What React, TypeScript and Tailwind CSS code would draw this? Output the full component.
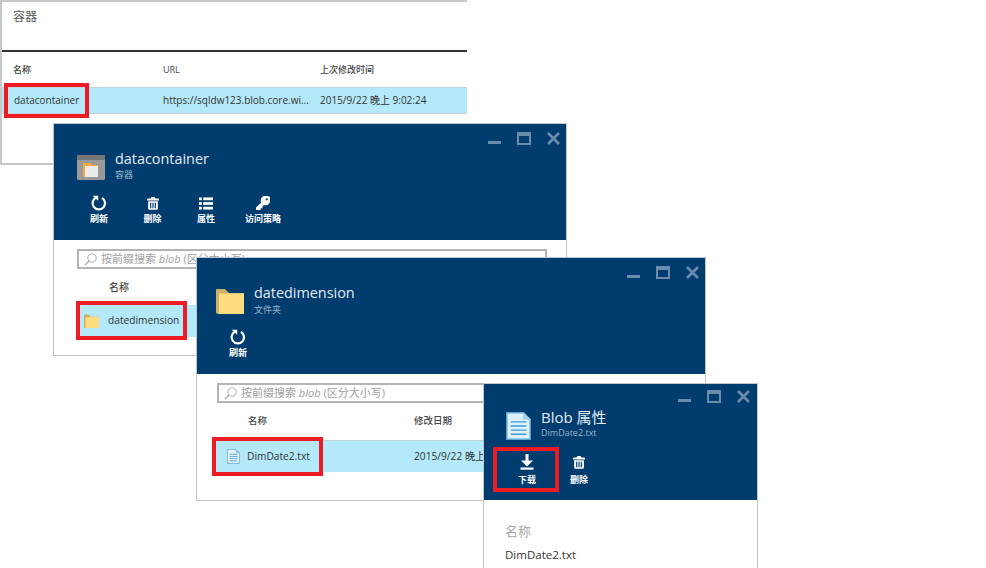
import React from "react";

const font = { fontFamily: '"Open Sans", "Noto Sans CJK SC", sans-serif' };

function Refresh() {
  return (
    <svg width="16" height="16" viewBox="0 0 16 16" fill="none">
      <path d="M5.2 2.6A6.2 6.2 0 1 0 11 2.9" stroke="#fff" strokeWidth="2.2" />
      <path d="M1.6 0.8 L7.2 0.8 L7.2 5.8 Z" fill="#fff" />
    </svg>
  );
}

function Trash() {
  return (
    <svg width="12" height="13" viewBox="0 0 14 15" fill="#fff">
      <path d="M5 0h4l.6 1.6H13a1 1 0 0 1 1 1V4H0V2.6a1 1 0 0 1 1-1h3.4z" />
      <path d="M1.3 5h11.4v8.4a1.4 1.4 0 0 1-1.4 1.4H2.7a1.4 1.4 0 0 1-1.4-1.4zM3.6 6.6v6.4h1.4V6.6zM6.3 6.6v6.4h1.4V6.6zM9 6.6v6.4h1.4V6.6z" fillRule="evenodd" />
    </svg>
  );
}

function ListIcon() {
  return (
    <svg width="14" height="13" viewBox="0 0 15 13" fill="#fff">
      <rect x="0" y="0" width="3" height="3" />
      <rect x="4.5" y="0" width="10.5" height="3" />
      <rect x="0" y="5" width="3" height="3" />
      <rect x="4.5" y="5" width="10.5" height="3" />
      <rect x="0" y="10" width="3" height="3" />
      <rect x="4.5" y="10" width="10.5" height="3" />
    </svg>
  );
}

function KeyIcon() {
  return (
    <svg width="14" height="14" viewBox="0 0 15 15" fill="#fff">
      <path d="M9.5 0H13a2 2 0 0 1 2 2v3.5A4.5 4.5 0 0 1 10.5 10c-.8 0-1.3-.1-1.9-.4L7 11.2V13H5v2H0v-2.6l5.4-5.3A5 5 0 0 1 5 4.5 4.5 4.5 0 0 1 9.5 0z" />
      <circle cx="11.5" cy="3.5" r="1.2" fill="#003c6e" />
    </svg>
  );
}

function Download() {
  return (
    <svg width="14" height="16" viewBox="0 0 14 16" fill="#fff">
      <path d="M5.5 0h3v6.5H13L7 12.5 1 6.5h4.5z" />
      <rect x="0.5" y="13.5" width="13" height="2.2" />
    </svg>
  );
}

function FolderIcon({ w, h }: { w: number; h: number }) {
  return (
    <svg width={w} height={h} viewBox="0 0 28 26">
      <path d="M0 2a1 1 0 0 1 1-1h8l4 4h15v21H2a2 2 0 0 1-2-2z" fill="#cdb066" />
      <path d="M3 5.5h25V26H3z" fill="#ffdc7f" />
    </svg>
  );
}

function ContainerIcon() {
  return (
    <svg width="28" height="25" viewBox="0 0 28 25">
      <rect width="28" height="25" rx="1.5" fill="#9a9a9a" />
      <rect width="28" height="5" fill="#777777" />
      <path d="M6 8h8l1 2h6v12H6z" fill="#f8a840" />
      <path d="M8 11h13v11H8z" fill="#ebebeb" />
    </svg>
  );
}

function FileIcon({ w, h, light }: { w: number; h: number; light?: boolean }) {
  return (
    <svg width={w} height={h} viewBox="0 0 24 27">
      <path d="M.7.7h16l6.6 6.6v19H.7z" fill={light ? "#dff1fa" : "#e6f5fc"} stroke="#5ba7d6" strokeWidth="1.4" />
      <path d="M16.5 0 24 7.5h-7.5z" fill={light ? "#9fd0ec" : "#8cc4e6"} />
      <path d="M4.5 9.5h15M4.5 13.5h15M4.5 17.5h15M4.5 21.5h15" stroke="#3f9bd6" strokeWidth="1.4" />
    </svg>
  );
}

function WindowControls({ className }: { className: string }) {
  return (
    <div className={`absolute flex items-start gap-[16px] ${className}`}>
      <div className="mt-[9px] h-[3px] w-[13px] bg-[#6c8cab]" />
      <div className="h-[13px] w-[14px] border-2 border-t-[4px] border-[#6c8cab]" />
      <svg width="13" height="13" viewBox="0 0 13 13" stroke="#6c8cab" strokeWidth="2.6">
        <path d="M1 1l11 11M12 1 1 12" />
      </svg>
    </div>
  );
}

function Tool({
  icon,
  label,
  className,
  labelClassName = "mt-[1px]",
}: {
  icon: React.ReactNode;
  label: string;
  className: string;
  labelClassName?: string;
}) {
  return (
    <div className={`flex flex-col items-center ${className}`}>
      <div className="flex h-[18px] items-center">{icon}</div>
      <div className={`text-[9px] leading-[12px] font-bold text-white ${labelClassName}`}>{label}</div>
    </div>
  );
}

function SearchBox({ className }: { className: string }) {
  return (
    <div className={`flex h-[20px] items-center border-2 border-[#b4b4b4] bg-white pl-[5px] ${className}`}>
      <svg width="13" height="13" viewBox="0 0 13 13" fill="none" stroke="#b0b0b0" strokeWidth="1">
        <circle cx="8" cy="5" r="4.2" />
        <path d="M5 8 .8 12.2" strokeWidth="1.4" />
      </svg>
      <span className="ml-[4px] text-[11px] text-[#a0a0a0]">
        按前缀搜索 <i>blob</i> (区分大小写)
      </span>
    </div>
  );
}

function RedBox({ className }: { className: string }) {
  return <div className={`absolute border-[4px] border-[#ed1c24] ${className}`} />;
}

export default function App() {
  return (
    <div className="relative h-[568px] w-[986px] overflow-hidden bg-white text-[#333]" style={font}>
      {/* 容器 list */}
      <div className="absolute top-0 left-0 h-[165px] w-[467px] border-t-2 border-b-2 border-l-2 border-[#c8c8c8] bg-white">
        <div className="h-[50px] border-b-2 border-[#333] pt-[6px] pl-[11px] text-[12px] leading-[18px] text-[#555]">容器</div>
        <div className="flex h-[35px] items-center pl-[11px] text-[9px] font-medium text-[#444]">
          <div className="w-[150px]">名称</div>
          <div className="w-[157px]">URL</div>
          <div>上次修改时间</div>
        </div>
        <div className="flex h-[27px] items-center border-t border-b border-[#c4d4da] bg-[#b3e9f9] pl-[12px] text-[10px] text-[#333]">
          <div className="w-[149px]">datacontainer</div>
          <div className="w-[157px]">https://sqldw123.blob.core.wi...</div>
          <div>2015/9/22 晚上 9:02:24</div>
        </div>
      </div>
      <RedBox className="top-[83px] left-[4px] h-[35px] w-[85px]" />

      {/* datacontainer blade */}
      <div className="absolute top-[123px] left-[53px] h-[233px] w-[514px] border border-[#c0c6cc] bg-white">
        <div className="relative h-[116px] bg-[#003c6e]">
          <WindowControls className="top-[8px] right-[6px]" />
          <div className="flex items-start pt-[25px] pl-[23px]">
            <div className="mt-[6px]">
              <ContainerIcon />
            </div>
            <div className="ml-[10px]">
              <div className="text-[14.4px] leading-[20px] text-[#e4ecf3]">datacontainer</div>
              <div className="text-[9px] leading-[11px] text-[#9db5ca]">容器</div>
            </div>
          </div>
          <div className="mt-[14px] flex pl-[18px]">
            <Tool icon={<Refresh />} label="刷新" className="w-[54px]" />
            <Tool icon={<Trash />} label="删除" className="w-[53px]" />
            <Tool icon={<ListIcon />} label="属性" className="w-[54px]" />
            <Tool icon={<KeyIcon />} label="访问策略" className="w-[60px]" />
          </div>
        </div>
        <SearchBox className="mt-[9px] ml-[23px] w-[470px]" />
        <div className="mt-[9px] pl-[55px] text-[10px] leading-[18px] font-medium text-[#444]">名称</div>
        <div className="mt-[9px] ml-[22px] flex h-[32px] items-center bg-[#b3e9f9] pl-[8px] text-[10.2px] text-[#333]">
          <FolderIcon w={15} h={14} />
          <span className="ml-[9px]">datedimension</span>
        </div>
      </div>
      <RedBox className="top-[301px] left-[76px] h-[39px] w-[111px]" />

      {/* datedimension blade */}
      <div className="absolute top-[257px] left-[196px] h-[244px] w-[510px] border border-[#c0c6cc] bg-white">
        <div className="relative h-[116px] bg-[#003c6e]">
          <WindowControls className="top-[8px] right-[6px]" />
          <div className="flex items-start pt-[25px] pl-[19px]">
            <div className="mt-[5px]">
              <FolderIcon w={28} h={26} />
            </div>
            <div className="ml-[10px]">
              <div className="text-[14.4px] leading-[20px] text-[#e4ecf3]">datedimension</div>
              <div className="mt-[1px] text-[9px] leading-[11px] text-[#9db5ca]">文件夹</div>
            </div>
          </div>
          <div className="mt-[13px] flex pl-[14px]">
            <Tool icon={<Refresh />} label="刷新" className="w-[54px]" />
          </div>
        </div>
        <SearchBox className="mt-[9px] ml-[20px] w-[470px]" />
        <div className="mt-[9px] flex pl-[51px] text-[9.5px] leading-[18px] font-medium text-[#444]">
          <div className="w-[166px]">名称</div>
          <div>修改日期</div>
        </div>
        <div className="mt-[10px] ml-[19px] flex h-[32px] items-center border-t border-[#c4d4da] bg-[#b3e9f9] pl-[11px] text-[10.2px] text-[#333]">
          <FileIcon w={13} h={15} />
          <span className="ml-[7px] w-[167px]">DimDate2.txt</span>
          <span>2015/9/22 晚上</span>
        </div>
      </div>
      <RedBox className="top-[437px] left-[212px] h-[39px] w-[111px]" />

      {/* Blob properties blade */}
      <div className="absolute top-[383px] left-[483px] h-[192px] w-[275px] border border-[#c0c6cc] bg-white">
        <div className="relative h-[116px] bg-[#003c6e]">
          <WindowControls className="top-[6px] right-[7px]" />
          <div className="flex items-start pt-[23px] pl-[22px]">
            <div className="mt-[5px]">
              <FileIcon w={25} h={28} light />
            </div>
            <div className="ml-[10px]">
              <div className="text-[15px] leading-[20px] text-[#e4ecf3]">Blob 属性</div>
              <div className="text-[9px] leading-[11px] text-[#9db5ca]">DimDate2.txt</div>
            </div>
          </div>
          <div className="mt-[13px] flex pl-[13px]">
            <Tool icon={<Download />} label="下载" className="w-[60px]" labelClassName="mt-[3px]" />
            <Tool icon={<Trash />} label="删除" className="w-[44px]" labelClassName="mt-[3px]" />
          </div>
        </div>
        <div className="pt-[22px] pl-[21px]">
          <div className="text-[13px] leading-[18px] text-[#aaa]">名称</div>
          <div className="mt-[6px] text-[11.5px] leading-[18px] text-[#333]">DimDate2.txt</div>
        </div>
      </div>
      <RedBox className="top-[447px] left-[493px] h-[45px] w-[66px]" />
    </div>
  );
}
